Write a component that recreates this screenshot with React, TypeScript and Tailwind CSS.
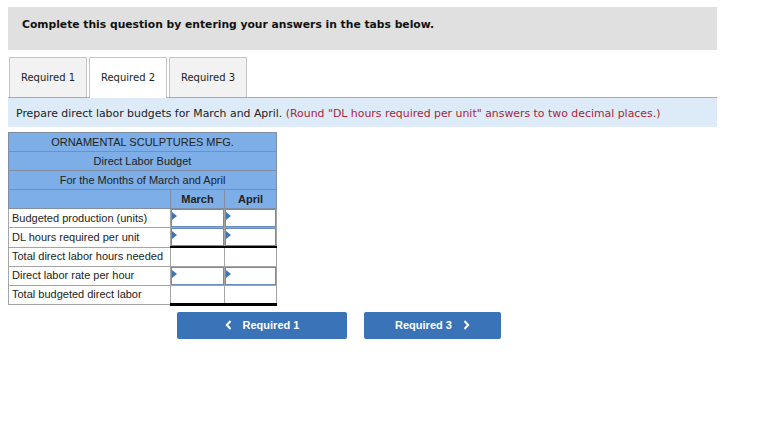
import React from "react";

const rows = [
  { label: "Budgeted production (units)", input: true },
  { label: "DL hours required per unit", input: true },
  { label: "Total direct labor hours needed", input: false, total: "single" },
  { label: "Direct labor rate per hour", input: true },
  { label: "Total budgeted direct labor", input: false, total: "double" },
];

function InputCell() {
  return (
    <div className="relative h-[18px] w-full border border-[#6a8cba] bg-white">
      <span className="absolute left-0 top-[2px] h-0 w-0 border-y-[4px] border-l-[5px] border-y-transparent border-l-[#3f74b5]" />
    </div>
  );
}

function BudgetTable() {
  return (
    <table
      className="ml-2 mt-[5px] border-collapse text-[11px] text-[#222]"
      style={{ fontFamily: '"Liberation Sans", Arial, sans-serif' }}
    >
      <colgroup>
        <col className="w-[162px]" />
        <col className="w-[54px]" />
        <col className="w-[52px]" />
      </colgroup>
      <tbody>
        {["ORNAMENTAL SCULPTURES MFG.", "Direct Labor Budget", "For the Months of March and April"].map((t) => (
          <tr key={t} className="h-[19px]">
            <td colSpan={3} className="border border-[#7f8ea3] bg-[#7daee7] p-0 text-center">
              {t}
            </td>
          </tr>
        ))}
        <tr className="h-[19px] font-bold">
          <td className="border border-[#7f8ea3] bg-[#7daee7] p-0" />
          <td className="border border-[#7f8ea3] bg-[#7daee7] p-0 text-center">March</td>
          <td className="border border-[#7f8ea3] bg-[#7daee7] p-0 text-center">April</td>
        </tr>
        {rows.map((r) => (
          <tr key={r.label} className="h-[19px]">
            <td className="border border-[#a5a5a5] bg-white p-0 pl-[3px]">{r.label}</td>
            {[0, 1].map((i) =>
              r.input ? (
                <td key={i} className="border border-[#a5a5a5] p-0">
                  <InputCell />
                </td>
              ) : (
                <td
                  key={i}
                  className={
                    r.total === "double"
                      ? "border border-x-[#a5a5a5] border-t-black border-b-[3px] border-b-black p-0"
                      : "border border-x-[#a5a5a5] border-b-[#a5a5a5] border-t-[2px] border-t-black p-0"
                  }
                />
              )
            )}
          </tr>
        ))}
      </tbody>
    </table>
  );
}

export default function App() {
  return (
    <div className="h-[427px] w-[770px] bg-white pt-[7px]" style={{ fontFamily: '"DejaVu Sans", Verdana, sans-serif' }}>
      <div className="ml-2 h-[43px] w-[709px] bg-[#e0e0e0] pl-[14px] pt-[10px]">
        <p className="text-[10.75px] font-bold text-[#111]">Complete this question by entering your answers in the tabs below.</p>
      </div>

      <div className="ml-2 mt-[7px] flex h-[40px] items-end gap-[2px] pl-[1px]">
        <div className="flex h-[40px] w-[78px] items-center justify-center border border-b-0 border-[#c4c4c4] bg-[#f2f2f2] text-[10px] text-[#222]">
          Required 1
        </div>
        <div className="z-10 -mb-px flex h-[41px] w-[78px] items-center justify-center border border-b-0 border-[#c4c4c4] bg-white pb-px text-[10px] text-[#222]">
          Required 2
        </div>
        <div className="flex h-[40px] w-[78px] items-center justify-center border border-b-0 border-[#c4c4c4] bg-[#f2f2f2] text-[10px] text-[#222]">
          Required 3
        </div>
      </div>

      <div className="ml-2 flex h-[30px] w-[709px] items-center border-t border-[#a3acb5] bg-[#ddebf8] pl-2 pt-[3px] text-[10.9px] text-[#222]">
        <span>
          Prepare direct labor budgets for March and April.{" "}
          <span className="text-[#ac2438]">(Round "DL hours required per unit" answers to two decimal places.)</span>
        </span>
      </div>

      <BudgetTable />

      <div
        className="mt-[6px] flex gap-[17px] pl-[177px] text-[11px] font-bold text-white"
        style={{ fontFamily: '"Liberation Sans", Arial, sans-serif' }}
      >
        <button className="flex h-[27px] w-[170px] items-center justify-center gap-[11px] rounded-[2px] bg-[#3a73b8]">
          <svg width="7" height="10" viewBox="0 0 7 10" fill="none" stroke="white" strokeWidth="2">
            <path d="M5.5 1 L1.8 5 L5.5 9" />
          </svg>
          Required 1
        </button>
        <button className="flex h-[27px] w-[137px] items-center justify-center gap-[11px] rounded-[2px] bg-[#3a73b8]">
          Required 3
          <svg width="7" height="10" viewBox="0 0 7 10" fill="none" stroke="white" strokeWidth="2">
            <path d="M1.5 1 L5.2 5 L1.5 9" />
          </svg>
        </button>
      </div>
    </div>
  );
}
